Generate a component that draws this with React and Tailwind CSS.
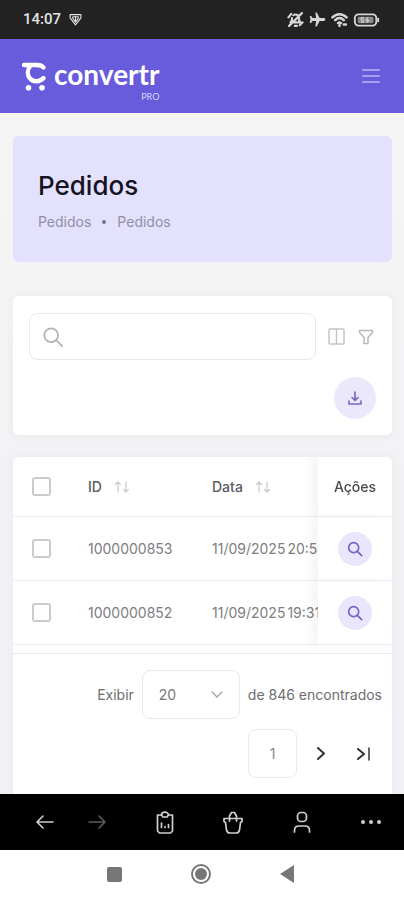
import React from "react";

const orders = [
  { id: "1000000853", date: "11/09/2025", time: "20:53" },
  { id: "1000000852", date: "11/09/2025", time: "19:31" },
];

function Icon({ className, children, width = 2, viewBox = "0 0 24 24" }) {
  return (
    <svg
      aria-hidden="true"
      className={className}
      viewBox={viewBox}
      fill="none"
      stroke="currentColor"
      strokeWidth={width}
      strokeLinecap="round"
      strokeLinejoin="round"
    >
      {children}
    </svg>
  );
}

function SearchIcon({ className, width }) {
  return (
    <Icon className={className} width={width}>
      <circle cx="10" cy="10" r="7.5" />
      <path d="M15.5 15.5 22 22" />
    </Icon>
  );
}

function StatusBar() {
  return (
    <div className="flex h-[39px] shrink-0 items-center justify-between bg-[#222222] pr-6 pl-[23px] text-[#e4e4e4]">
      <div className="flex items-center gap-2">
        <span className="font-[Roboto,sans-serif] text-[15px] font-medium">14:07</span>
        <Icon className="size-[13px]" width={2}>
          <path d="M2 3h20v6L12 22 2 9z" />
          <path d="M7 7h10v3l-5 7-5-7zM12 7v9" />
        </Icon>
      </div>
      <div className="flex items-center gap-[5px] text-[#d6d6d6]">
        <Icon className="size-[17px]" width={3}>
          <path d="M6 16h13l-2-3V9a5 5 0 0 0-8-3M7 10v3l-2 3M11 21h3M3 21 21 3M2 9l4-5M18 20l4-4" />
        </Icon>
        <svg aria-hidden="true" className="size-[17px]" viewBox="0 0 24 24" fill="currentColor">
          <path d="M23 12c0-1-1-2-2-2h-6L11 2H9l1 8H5L3 7H1l1 5-1 5h2l2-3h5l-1 8h2l4-8h6c1 0 2-1 2-2z" />
        </svg>
        <Icon className="size-[17px]" width={3.5}>
          <path d="M2 9c6-6 14-6 20 0M6 13c4-4 8-4 12 0M10 17c1-1 3-1 4 0M12 20v1M18 19h3" />
        </Icon>
        <Icon className="h-[14px] w-[27px]" viewBox="0 0 27 15" width={2}>
          <rect x="1" y="1.500" width="23" height="12" rx="4" />
          <path d="M26 6v3" />
          <rect x="4" y="4" width="17" height="7" rx="1.500" fill="#8a8a8a" stroke="none" />
          <path d="M10 5H8v2.500h2V10H8M15 5l-2 3h3l-2 2" strokeWidth="1.200" />
        </Icon>
      </div>
    </div>
  );
}

function Header() {
  return (
    <header className="flex h-[74px] shrink-0 items-center justify-between bg-[#695cdc] pr-6 pl-[22px] text-white">
      <a href="#inicio" aria-label="convertr pro" className="flex items-start gap-2 pt-1.5">
        <svg aria-hidden="true" className="mt-[6px] h-[29px] w-6" viewBox="0 0 24 29" fill="none">
          <g stroke="white" strokeWidth="4.300" strokeLinecap="round" strokeLinejoin="round">
            <path d="M2 3h13c3 0 5 .5 6.500 2.500" />
            <path d="M8.500 3.500C5 8 5 13 8 16.500c3.500 4 10 3.500 13.500-.5" />
          </g>
          <circle cx="6.500" cy="25.800" r="2.800" fill="white" />
          <circle cx="20" cy="25.800" r="2.800" fill="white" />
        </svg>
        <span className="flex flex-col items-end">
          <span className="font-[Lato,sans-serif] text-[28px] leading-9 font-bold">convertr</span>
          <span className="font-[Lato,sans-serif] text-[9px] leading-[10px] text-[#d8d4fb]">PRO</span>
        </span>
      </a>
      <button type="button" aria-label="Menu" className="text-[#a79ef0]">
        <Icon className="h-4 w-[18px]" viewBox="0 0 18 16" width={2}>
          <path d="M1 2h16M1 8h16M1 14h16" />
        </Icon>
      </button>
    </header>
  );
}

function PageTitle() {
  return (
    <section className="rounded-md bg-[#e3e1fd] px-[25px] pt-8 pb-[30px]">
      <h1 className="text-[26px] leading-9 font-medium text-[#15131f]">Pedidos</h1>
      <nav aria-label="Trilha" className="mt-2 flex items-center gap-[11px] text-sm leading-5 text-[#9190a4]">
        <a href="#pedidos">Pedidos</a>
        <span className="size-1 rounded-full bg-[#77758c]" />
        <a href="#pedidos">Pedidos</a>
      </nav>
    </section>
  );
}

function Filters() {
  return (
    <section className="mt-[34px] flex flex-col items-end gap-[17px] rounded-md bg-white p-4 pt-[17px] shadow-[0_0_10px_rgba(60,60,120,0.05)]">
      <div className="flex w-full items-center">
        <label className="flex h-[47px] min-w-0 flex-1 items-center gap-3 rounded-lg border border-[#e9e9eb] px-3 text-[#b2b2b2]">
          <SearchIcon className="size-[22px] shrink-0" width={1.9} />
          <input aria-label="Pesquisar" type="search" className="w-full min-w-0 text-sm text-[#555555] outline-none" />
        </label>
        <button type="button" aria-label="Colunas" className="ml-3 text-[#c5c5c5]">
          <Icon className="size-[17px]" viewBox="0 0 17 17" width={1.5}>
            <rect x="1" y="1" width="15" height="15" rx="1" />
            <path d="M8.500 1v15" />
          </Icon>
        </button>
        <button type="button" aria-label="Filtrar" className="mr-0.5 ml-[13px] text-[#b9b9b9]">
          <Icon className="size-4" viewBox="0 0 16 16" width={1.5}>
            <path d="M1.500 1.500h13v2L10 8.500v6H6v-6L1.500 3.500z" />
          </Icon>
        </button>
      </div>
      <button
        type="button"
        aria-label="Baixar"
        className="flex size-[42px] items-center justify-center rounded-full bg-[#ebe8fb] text-[#7169c2]"
      >
        <Icon className="size-[14px]" viewBox="0 0 14 14" width={1.600}>
          <path d="M7 1v8M4 6.500l3 3 3-3M1 10v3h12v-3" />
        </Icon>
      </button>
    </section>
  );
}

function SortIcon() {
  return (
    <Icon className="h-3 w-4" viewBox="0 0 16 12" width={1.200}>
      <path d="M4 11V1M1.500 3.500 4 1l2.500 2.500M12 1v10M9.500 8.500 12 11l2.500-2.500" />
    </Icon>
  );
}

function HeaderCell({ children }) {
  return (
    <th scope="col" className="border-b border-[#ececee] px-[19px] text-left font-medium text-[#5a5a5f]">
      <button type="button" className="flex items-center gap-3">
        {children}
        <span className="text-[#c9c9cc]">
          <SortIcon />
        </span>
      </button>
    </th>
  );
}

function Check({ label }) {
  return (
    <input
      type="checkbox"
      aria-label={label}
      className="block size-[19px] appearance-none rounded-[3px] border-2 border-[#cbcbcd] bg-white checked:bg-[#695cdc]"
    />
  );
}

function OrdersTable() {
  return (
    <div className="shrink-0 overflow-hidden rounded-t-md border-b border-[#e8e8ea] pb-2">
      <table className="w-[520px] min-w-full table-fixed border-separate border-spacing-0 text-sm text-[#7d7d81]">
        <colgroup>
          <col className="w-14" />
          <col className="w-[124px]" />
          <col />
          <col className="w-[74px]" />
        </colgroup>
        <thead>
          <tr className="h-[60px]">
            <th className="border-b border-[#ececee] pl-[19px]">
              <Check label="Selecionar todos" />
            </th>
            <HeaderCell>ID</HeaderCell>
            <HeaderCell>Data</HeaderCell>
            <th
              scope="col"
              className="sticky right-0 border-b border-[#ececee] bg-white text-center font-medium text-[#4a4a4f] shadow-[-8px_0_10px_rgba(0,0,0,0.04)]"
            >
              Ações
            </th>
          </tr>
        </thead>
        <tbody>
          {orders.map((order) => (
            <tr key={order.id} className="h-16">
              <td className="border-b border-[#ececee] pl-[19px]">
                <Check label={"Selecionar pedido " + order.id} />
              </td>
              <td className="border-b border-[#ececee] px-[19px]">{order.id}</td>
              <td className="border-b border-[#ececee] px-[19px]">
                <div className="flex gap-0.5">
                  <span>{order.date}</span>
                  <span>{order.time}</span>
                </div>
              </td>
              <td className="sticky right-0 border-b border-[#ececee] bg-white shadow-[-8px_0_10px_rgba(0,0,0,0.04)]">
                <button
                  type="button"
                  aria-label={"Ver pedido " + order.id}
                  className="mx-auto flex size-[34px] items-center justify-center rounded-full bg-[#e9e6fc] text-[#7067c4]"
                >
                  <SearchIcon className="size-4" width={2.500} />
                </button>
              </td>
            </tr>
          ))}
        </tbody>
      </table>
    </div>
  );
}

function Pagination() {
  return (
    <div className="flex flex-col items-end gap-[10px] px-[10px] pt-4 text-sm text-[#6d6d72]">
      <div className="flex items-center gap-2">
        <label htmlFor="page-size">Exibir</label>
        <div className="relative">
          <select
            id="page-size"
            defaultValue="20"
            className="h-[49px] w-[98px] appearance-none rounded-lg border border-[#e9e9eb] bg-white pl-4 text-sm text-[#77777b]"
          >
            <option>20</option>
            <option>50</option>
            <option>100</option>
          </select>
          <Icon className="pointer-events-none absolute top-1/2 right-[17px] h-2 w-3 -translate-y-1/2 text-[#a5a5a8]" viewBox="0 0 12 8" width={1.400}>
            <path d="m1 1 5 5 5-5" />
          </Icon>
        </div>
        <span className="whitespace-nowrap">de 846 encontrados</span>
      </div>
      <div className="flex items-center pr-3">
        <button type="button" className="size-[49px] rounded-lg border border-[#e9e9eb] text-[#88888c]">
          1
        </button>
        <button type="button" aria-label="Próxima página" className="ml-5 text-[#333333]">
          <Icon className="h-[13px] w-[9px]" viewBox="0 0 9 13" width={2}>
            <path d="m1 1 6 5.500L1 12" />
          </Icon>
        </button>
        <button type="button" aria-label="Última página" className="ml-[31px] text-[#333333]">
          <Icon className="h-[14px] w-[13px]" viewBox="0 0 13 14" width={2}>
            <path d="m1 2 6 5-6 5" />
            <path d="M12 1v12" strokeWidth="1.500" />
          </Icon>
        </button>
      </div>
    </div>
  );
}

function BrowserBar() {
  return (
    <nav
      aria-label="Navegador"
      className="flex h-14 shrink-0 items-center justify-between bg-black pr-[23px] pl-9 text-[#d0d0d0]"
    >
      <button type="button" aria-label="Voltar">
        <Icon className="h-[14px] w-[18px]" viewBox="0 0 18 14" width={1.600}>
          <path d="M17 7H1M7 1 1 7l6 6" />
        </Icon>
      </button>
      <button type="button" aria-label="Avançar" className="-ml-4 text-[#5c5c5c]">
        <Icon className="h-[14px] w-[18px]" viewBox="0 0 18 14" width={1.600}>
          <path d="M1 7h16M11 1l6 6-6 6" />
        </Icon>
      </button>
      <button type="button" aria-label="Pedidos">
        <Icon className="h-[23px] w-[18px]" viewBox="0 0 18 23" width={1.700}>
          <path d="M5.500 4H1.500v16l2 2h11l2-2V4h-4" />
          <path d="M9 1.200c-2 0-3.500 1.300-3.500 2.800L7 6h4l1.500-2c0-1.500-1.500-2.800-3.500-2.800z" />
          <path d="M5.500 12v4.500M9 15.500v1M12.500 13.500v3" />
        </Icon>
      </button>
      <button type="button" aria-label="Sacola">
        <Icon className="h-[23px] w-5" viewBox="0 0 20 23" width={1.700}>
          <path d="M1 7.500h18v3l-1.500 1-1 7.500q-.5 3-3.500 3H7q-3 0-3.500-3l-1-7.500-1.500-1z" />
          <path d="M6.500 10V5l2-3.500h3l2 3.500v5" />
        </Icon>
      </button>
      <button type="button" aria-label="Conta">
        <Icon className="h-[22px] w-[18px]" viewBox="0 0 18 22" width={1.700}>
          <rect x="4.500" y="1.500" width="9" height="9" rx="3.500" />
          <path d="M1.500 21v-1.500c0-3 2-4.500 4.500-4.500h6c2.500 0 4.500 1.500 4.500 4.500V21" />
        </Icon>
      </button>
      <button type="button" aria-label="Mais">
        <svg aria-hidden="true" className="h-1 w-5" viewBox="0 0 20 4" fill="currentColor">
          <circle cx="2" cy="2" r="2" />
          <circle cx="10" cy="2" r="2" />
          <circle cx="18" cy="2" r="2" />
        </svg>
      </button>
    </nav>
  );
}

function SystemBar() {
  return (
    <nav
      aria-label="Sistema"
      className="flex h-[50px] shrink-0 items-center justify-center gap-[69px] bg-white pr-1 pb-0.5 text-[#777777]"
    >
      <button type="button" aria-label="Recentes" className="size-[15px] rounded-xs bg-[#777777]" />
      <button
        type="button"
        aria-label="Início"
        className="flex size-5 items-center justify-center rounded-full border-2 border-[#777777]"
      >
        <span className="size-3 rounded-full bg-[#777777]" />
      </button>
      <button type="button" aria-label="Retornar">
        <svg aria-hidden="true" className="h-[18px] w-[14px]" viewBox="0 0 14 18" fill="currentColor">
          <path d="M14 0v18L0 9z" />
        </svg>
      </button>
    </nav>
  );
}

export default function App() {
  return (
    <div className="flex h-screen flex-col overflow-hidden bg-[#f5f5f6] font-[Inter,sans-serif]">
      <StatusBar />
      <Header />
      <main className="flex min-h-0 flex-1 flex-col overflow-hidden bg-linear-to-b from-[#f5f5f5] to-[#f0f0f5] pt-[23px] pr-3 pl-[13px]">
        <PageTitle />
        <Filters />
        <section className="mt-[22px] flex min-h-0 flex-1 flex-col rounded-t-md bg-white shadow-[0_0_10px_rgba(60,60,120,0.05)]">
          <OrdersTable />
          <Pagination />
        </section>
      </main>
      <BrowserBar />
      <SystemBar />
    </div>
  );
}
